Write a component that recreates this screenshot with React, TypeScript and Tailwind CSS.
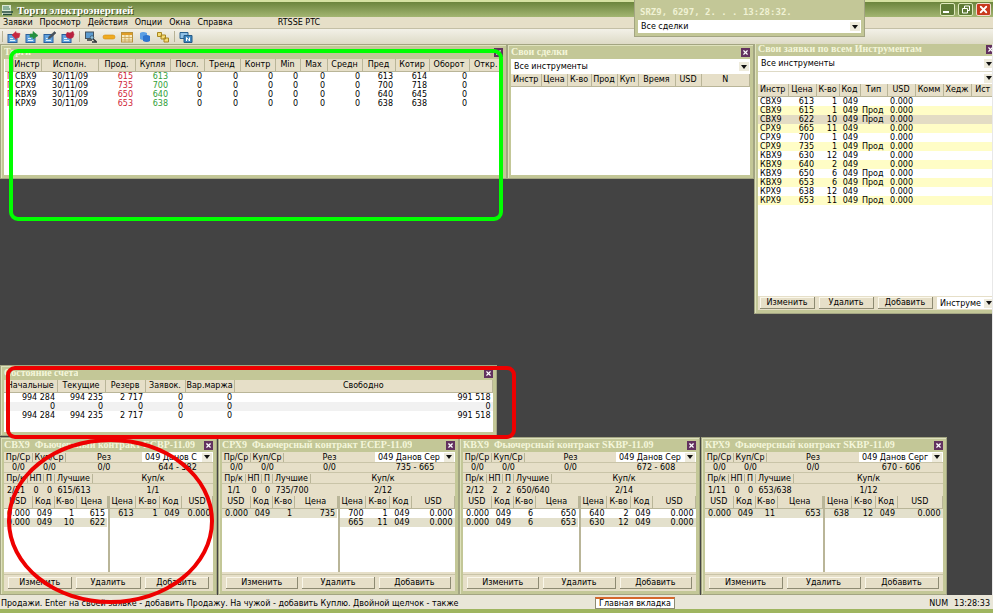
import React from 'react';
import { X } from 'lucide-react';

type Cell = string | number;

interface Contract {
  code: string;
  title: string;
  position: string;
  account: string;
  accountWidth: string;
  range: string;
  sellTotal: string;
  np: number;
  p: number;
  best: string;
  buyTotal: string;
  sells: Cell[][];
  buys: Cell[][];
}

const quotes: Cell[][] = [
  ['П', 'СВХ9', '30/11/09', 615, 613, 0, 0, 0, 0, 0, 0, 613, 614, 0, ''],
  ['П', 'СРХ9', '30/11/09', 735, 700, 0, 0, 0, 0, 0, 0, 700, 718, 0, ''],
  ['П', 'КВХ9', '30/11/09', 650, 640, 0, 0, 0, 0, 0, 0, 640, 645, 0, ''],
  ['П', 'КРХ9', '30/11/09', 653, 638, 0, 0, 0, 0, 0, 0, 638, 638, 0, ''],
];

const quoteColumns = [
  { label: '', col: 'w-[8px]' },
  { label: 'Инстр', col: 'w-[28px]' },
  { label: 'Исполн.', col: 'w-[57px]' },
  { label: 'Прод.', col: 'w-[37px]' },
  { label: 'Купля', col: 'w-[35px]' },
  { label: 'Посл.', col: 'w-[34px]' },
  { label: 'Тренд', col: 'w-[36px]' },
  { label: 'Контр', col: 'w-[35px]' },
  { label: 'Min', col: 'w-[25px]' },
  { label: 'Max', col: 'w-[27px]' },
  { label: 'Средн', col: 'w-[35px]' },
  { label: 'Пред', col: 'w-[33px]' },
  { label: 'Котир', col: 'w-[34px]' },
  { label: 'Оборот', col: 'w-[40px]' },
  { label: 'Откр.', col: '' },
];

// Ask prices are red, bid prices are green
const quoteCell = (_: number, c: number) => {
  if (c === 0) return 'px-[2px] text-left text-[#cf2438]';
  if (c === 1) return 'px-[2px] text-left';
  if (c === 2) return 'pr-[10px] text-right';
  if (c === 3) return 'px-[2px] text-right text-[#cf2438]';
  if (c === 4) return 'px-[2px] text-right text-[#2f9e37]';
  return 'px-[2px] text-right';
};

const orders: Cell[][] = [
  ['СВХ9', 613, 1, '049', '', '0.000'],
  ['СВХ9', 615, 1, '049', 'Прод', '0.000'],
  ['СВХ9', 622, 10, '049', 'Прод', '0.000'],
  ['СРХ9', 665, 11, '049', '', '0.000'],
  ['СРХ9', 700, 1, '049', '', '0.000'],
  ['СРХ9', 735, 1, '049', 'Прод', '0.000'],
  ['КВХ9', 630, 12, '049', '', '0.000'],
  ['КВХ9', 640, 2, '049', '', '0.000'],
  ['КВХ9', 650, 6, '049', 'Прод', '0.000'],
  ['КВХ9', 653, 6, '049', 'Прод', '0.000'],
  ['КРХ9', 638, 12, '049', '', '0.000'],
  ['КРХ9', 653, 11, '049', 'Прод', '0.000'],
];

const orderColumns = [
  { label: 'Инстр', col: 'w-[30px]' },
  { label: 'Цена', col: 'w-[28px]' },
  { label: 'К-во', col: 'w-[23px]' },
  { label: 'Код', col: 'w-[21px]' },
  { label: 'Тип', col: 'w-[27px]' },
  { label: 'USD', col: 'w-[28px]' },
  { label: 'Комм', col: 'w-[28px]' },
  { label: 'Хедж', col: 'w-[28px]' },
  { label: 'Ист', col: '' },
];

const dealColumns = [
  { label: 'Инстр', col: 'w-[30px]' },
  { label: 'Цена', col: 'w-[26px]' },
  { label: 'К-во', col: 'w-[24px]' },
  { label: 'Прод', col: 'w-[26px]' },
  { label: 'Куп', col: 'w-[21px]' },
  { label: 'Время', col: 'w-[37px]' },
  { label: 'USD', col: 'w-[26px]' },
  { label: 'N', col: '' },
];

const accountColumns = [
  { label: 'Начальные', col: 'w-[53px]' },
  { label: 'Текущие', col: 'w-[48px]' },
  { label: 'Резерв', col: 'w-[40px]' },
  { label: 'Заявок.', col: 'w-[40px]' },
  { label: 'Вар.маржа', col: 'w-[49px]' },
  { label: 'Свободно', col: '' },
];

const accountRows: Cell[][] = [
  ['994 284', '994 235', '2 717', 0, 0, '991 518'],
  [0, 0, 0, 0, 0, 0],
  ['994 284', '994 235', '2 717', 0, 0, '991 518'],
];

const sellColumns = [
  { label: 'USD', col: 'w-[28px]' },
  { label: 'Код', col: 'w-[22px]' },
  { label: 'К-во', col: 'w-[22px]' },
  { label: 'Цена', col: '' },
];

const buyColumns = [
  { label: 'Цена', col: 'w-[26px]' },
  { label: 'К-во', col: 'w-[24px]' },
  { label: 'Код', col: 'w-[22px]' },
  { label: 'USD', col: '' },
];

const contracts: Contract[] = [
  {
    code: 'СВХ9',
    title: 'СВХ9  Фьючерсный контракт ECBP-11.09',
    position: 'left-0 w-[217px]',
    account: '049 Данов С',
    accountWidth: 'w-[71px]',
    range: '644 - 582',
    sellTotal: '2/11',
    np: 0,
    p: 0,
    best: '615/613',
    buyTotal: '1/1',
    sells: [['0.000', '049', 1, 615], ['0.000', '049', 10, 622]],
    buys: [[613, 1, '049', '0.000']],
  },
  {
    code: 'СРХ9',
    title: 'СРХ9  Фьючерсный контракт ECEP-11.09',
    position: 'left-[218px] w-[241px]',
    account: '049 Данов Сер',
    accountWidth: 'w-[80px]',
    range: '735 - 665',
    sellTotal: '1/1',
    np: 0,
    p: 0,
    best: '735/700',
    buyTotal: '2/12',
    sells: [['0.000', '049', 1, 735]],
    buys: [[700, 1, '049', '0.000'], [665, 11, '049', '0.000']],
  },
  {
    code: 'КВХ9',
    title: 'КВХ9  Фьючерсный контракт SKBP-11.09',
    position: 'left-[459px] w-[241px]',
    account: '049 Данов Сер',
    accountWidth: 'w-[80px]',
    range: '672 - 608',
    sellTotal: '2/12',
    np: 2,
    p: 2,
    best: '650/640',
    buyTotal: '2/14',
    sells: [['0.000', '049', 6, 650], ['0.000', '049', 6, 653]],
    buys: [[640, 2, '049', '0.000'], [630, 12, '049', '0.000']],
  },
  {
    code: 'КРХ9',
    title: 'КРХ9  Фьючерсный контракт SKBP-11.09',
    position: 'left-[701px] w-[246px]',
    account: '049 Данов Серг',
    accountWidth: 'w-[84px]',
    range: '670 - 606',
    sellTotal: '1/11',
    np: 0,
    p: 0,
    best: '653/638',
    buyTotal: '1/12',
    sells: [['0.000', '049', 11, 653]],
    buys: [[638, 12, '049', '0.000']],
  },
];

interface PanelProps {
  title: string;
  className: string;
  children: React.ReactNode;
}

const Panel: React.FC<PanelProps> = ({ title, className, children }) => (
  <section className={`absolute flex flex-col border border-[#a3a582] bg-[#c3c797] p-[3px] pt-0 shadow-[inset_1px_1px_0_#dfe2bd] ${className}`}>
    <header className="flex h-[14px] shrink-0 items-center justify-between">
      <h2 className="overflow-hidden font-['Liberation_Serif',serif] text-[10px] leading-[12px] font-bold whitespace-pre text-[#f4f6da]">{title}</h2>
      <button aria-label="Закрыть" className="flex h-[9px] w-[9px] shrink-0 items-center justify-center border border-[#62315f] bg-[#62315f] text-white">
        <X size={7} strokeWidth={4} />
      </button>
    </header>
    {children}
  </section>
);

interface DropDownProps {
  label: string;
  value: string;
  className?: string;
}

const DropDown: React.FC<DropDownProps> = ({ label, value, className = '' }) => (
  <div className={`relative flex shrink-0 items-center bg-white ${className}`}>
    <select aria-label={label} className="h-full w-full appearance-none bg-transparent pl-[3px] text-black outline-none">
      <option>{value}</option>
    </select>
    <span className="pointer-events-none absolute right-px flex h-[9px] w-[10px] items-center justify-center bg-[#eeebdc]">
      <svg viewBox="0 0 6 4" className="h-[4px] w-[6px]">
        <path d="M0 0h6L3 4z" fill="#111" />
      </svg>
    </span>
  </div>
);

interface Column {
  label: string;
  col: string;
}

interface GridProps {
  columns: Column[];
  rows: Cell[][];
  cellClass?: (row: number, col: number) => string;
  rowClass?: (row: number) => string;
}

const Grid: React.FC<GridProps> = ({ columns, rows, cellClass = () => 'px-[2px] text-right', rowClass = () => '' }) => (
  <table className="w-full table-fixed border-collapse">
    <colgroup>
      {columns.map(c => <col key={c.label} className={c.col} />)}
    </colgroup>
    <thead>
      <tr className="h-[12px] bg-[#e6dfc8]">
        {columns.map(c => (
          <th key={c.label} className="overflow-hidden border-r border-b border-[#b9b598] p-0 text-center font-normal whitespace-nowrap">{c.label}</th>
        ))}
      </tr>
    </thead>
    <tbody>
      {rows.map((row, r) => (
        <tr key={r} className={`h-[9px] ${rowClass(r)}`}>
          {columns.map((c, i) => (
            <td key={c.label} className={`py-0 whitespace-nowrap ${cellClass(r, i)}`}>{row[i]}</td>
          ))}
        </tr>
      ))}
    </tbody>
  </table>
);

const ActionButtons = () => (
  <>
    {['Изменить', 'Удалить', 'Добавить'].map(label => (
      <button key={label} className="h-[12px] flex-1 border-r border-b border-[#8d8a72] bg-[#e6dfc8] shadow-[inset_1px_1px_0_#faf7ea]">{label}</button>
    ))}
  </>
);

const ContractPanel: React.FC<{ contract: Contract }> = ({ contract: c }) => (
  <Panel title={c.title} className={`top-[393px] h-[158px] ${c.position}`}>
    <div className="flex flex-1 flex-col bg-[#e6dfc8]">
      <div className="flex h-[11px] items-center border-b border-[#c9c4a8]">
        <span className="w-[29px] border-r border-[#b9b598] text-center">Пр/Ср</span>
        <span className="w-[33px] border-r border-[#b9b598] text-center">Куп/Ср</span>
        <span className="flex-1 text-center">Рез</span>
        <DropDown label="Счет" value={c.account} className={`h-[10px] ${c.accountWidth}`} />
      </div>
      <div className="flex h-[9px] items-center">
        <span className="w-[29px] text-center">0/0</span>
        <span className="w-[33px] text-center">0/0</span>
        <span className="flex-1 text-center">0/0</span>
        <span className={`text-center ${c.accountWidth}`}>{c.range}</span>
      </div>
      <div className="flex h-[12px] items-center border-y border-[#c9c4a8]">
        <span className="w-[24px] border-r border-[#b9b598] text-center">Пр/к</span>
        <span className="w-[16px] border-r border-[#b9b598] text-center">НП</span>
        <span className="w-[11px] border-r border-[#b9b598] text-center">П</span>
        <span className="w-[38px] border-r border-[#b9b598] text-center">Лучшие</span>
        <span className="flex-1 text-center">Куп/к</span>
      </div>
      <div className="flex h-[12px] items-center">
        <span className="w-[24px] text-center">{c.sellTotal}</span>
        <span className="w-[16px] text-center">{c.np}</span>
        <span className="w-[11px] text-center">{c.p}</span>
        <span className="w-[38px] text-center">{c.best}</span>
        <span className="flex-1 text-center">{c.buyTotal}</span>
      </div>
      <div className="flex h-[76px] bg-white">
        <div className="flex-1 border-r-2 border-[#b9b598]">
          <Grid columns={sellColumns} rows={c.sells} rowClass={r => (r === c.sells.length - 1 ? 'bg-[#e3e0cc]' : '')} />
        </div>
        <div className="flex-1">
          <Grid columns={buyColumns} rows={c.buys} rowClass={r => (r === c.buys.length - 1 ? 'bg-[#e3e0cc]' : '')} />
        </div>
      </div>
      <div className="mt-auto flex gap-[4px] border-t border-[#c9c4a8] px-[4px] pt-[2px] pb-[2px]">
        <ActionButtons />
      </div>
    </div>
  </Panel>
);

// Small document with a coloured mark in the corner
const OrderIcon: React.FC<{ mark: string; path: string }> = ({ mark, path }) => (
  <svg viewBox="0 0 14 12" className="h-[12px] w-[14px]">
    <rect x="1" y="3.500" width="9" height="8" fill="#62a4e0" stroke="#2b5f9c" />
    <path d="M3 9.500h5M3 7.500h3" stroke="#e2f1fc" />
    <path d={path} fill={mark} stroke={mark} strokeWidth=".6" />
  </svg>
);

const toolbar = [
  { label: 'Продажа', icon: <OrderIcon mark="#c8283f" path="M5 4l4-3.500V2l4 .5-1 4-3 .5v1.500z" /> },
  { label: 'Купля', icon: <OrderIcon mark="#25903f" path="M5 3h3V.5L13 4.500 8 8V6H5z" /> },
  { label: 'Правка', icon: <OrderIcon mark="#46505a" path="M5 8l1-2.500 5.500-5L13 2 7.500 7z" /> },
  { label: 'Снять', icon: <OrderIcon mark="#b8213f" path="M6 1.500l3 .5 3-1.500 1 3-1 3-3 1-3-1-1-2z" /> },
];

const tools = [
  {
    label: 'Монитор',
    icon: (
      <svg viewBox="0 0 14 12" className="h-[12px] w-[14px]">
        <rect x="1.500" y="1" width="8" height="6.500" fill="#5b9bd0" stroke="#44525e" />
        <path d="M3 9h5M8 7l4 3.500M8 11h5" stroke="#30363b" strokeWidth="1.600" />
        <circle cx="8" cy="6.500" r="1.800" fill="#8bc0dc" stroke="#2e4050" strokeWidth=".6" />
      </svg>
    ),
  },
  {
    label: 'Строка',
    icon: (
      <svg viewBox="0 0 14 12" className="h-[12px] w-[14px]">
        <rect x="1" y="4" width="12" height="4" rx="2" fill="#f0ab20" stroke="#d28b12" strokeWidth=".6" />
      </svg>
    ),
  },
  {
    label: 'Таблица',
    icon: (
      <svg viewBox="0 0 14 12" className="h-[12px] w-[14px]">
        <rect x="1.500" y="1.500" width="11" height="9.500" fill="#f7ecc2" stroke="#b8923c" />
        <path d="M2 3h10" stroke="#e09d28" strokeWidth="2" />
        <path d="M5 4v7M9 4v7M2 6.500h10M2 9h10" stroke="#c9a253" strokeWidth=".8" />
      </svg>
    ),
  },
  {
    label: 'Документы',
    icon: (
      <svg viewBox="0 0 14 12" className="h-[12px] w-[14px]">
        <path d="M2 2q3-2 7 0v6q-4 2-7 0z" fill="#5c9fe4" />
        <path d="M5 5q4-2 7 0v5q-3 2-7 0z" fill="#2f75cf" />
      </svg>
    ),
  },
  {
    label: 'Окна каскадом',
    icon: (
      <svg viewBox="0 0 14 12" className="h-[12px] w-[14px]">
        <path d="M1.500 1.500h4v4h-4zM5 4h4.500v4H5zM8 7h4.500v4H8z" fill="#f6dc72" stroke="#a88620" />
      </svg>
    ),
  },
];

export default function App() {
  return (
    <div className="relative flex min-h-screen flex-col overflow-hidden bg-[#e6dfc8] font-['DejaVu_Sans',sans-serif] text-[8px] leading-[9px] text-black">
      {/* Title bar */}
      <header className="flex h-[17px] items-center justify-between border-t-2 border-[#d6e2a2] bg-linear-to-b from-[#6c853d] to-[#a3b571] pr-[2px] pl-[2px]">
        <div className="flex items-center gap-[4px]">
          <svg viewBox="0 0 11 12" className="h-[12px] w-[11px]">
            <path d="M0 1h9v10H0z" fill="#dce9d6" />
            <path d="M1 3h6M1 5h7" stroke="#3c7d60" />
            <path d="M0 8h11M1 10.500h9" stroke="#234a3c" strokeWidth="1.400" />
          </svg>
          <h1 className="font-['Liberation_Serif',serif] text-[11px] leading-[14px] font-bold text-white [text-shadow:1px_1px_0_#45572a]">Торги электроэнергией</h1>
        </div>
        <div className="flex gap-[3px]">
          <button aria-label="Свернуть" className="flex h-[13px] w-[15px] items-end rounded-[2px] border border-[#dfe8bd] bg-[#5f7b36] p-[2px]">
            <span className="h-[2px] w-[6px] bg-white" />
          </button>
          <button aria-label="Развернуть" className="flex h-[13px] w-[15px] items-center justify-center rounded-[2px] border border-[#dfe8bd] bg-[#5f7b36]">
            <svg viewBox="0 0 10 9" className="h-[9px] w-[10px]">
              <path d="M3.500 3V1h5v4.500H7M1.500 3.500h5v4.500h-5z" fill="none" stroke="#fff" />
            </svg>
          </button>
          <button aria-label="Закрыть" className="flex h-[13px] w-[15px] items-center justify-center rounded-[2px] border border-[#f0dcd0] bg-[#c8391d] text-white">
            <X size={11} strokeWidth={4} />
          </button>
        </div>
      </header>

      {/* Menu */}
      <nav className="flex h-[12px] items-center gap-[7px] border-b border-[#c4bfa6] pl-[3px]">
        {['Заявки', 'Просмотр', 'Действия', 'Опции', 'Окна', 'Справка'].map(item => (
          <button key={item}>{item}</button>
        ))}
        <span className="ml-[38px]">RTSSE PTC</span>
      </nav>

      {/* Toolbar */}
      <div className="flex h-[15px] items-center gap-[4px] bg-linear-to-b from-[#f3f1e8] to-[#dddac6] pl-[2px]">
        <span className="h-[11px] w-px bg-[#b7b296]" />
        {toolbar.map(t => <button key={t.label} aria-label={t.label}>{t.icon}</button>)}
        <span className="h-[11px] w-px bg-[#b7b296]" />
        {tools.map(t => <button key={t.label} aria-label={t.label}>{t.icon}</button>)}
        <span className="h-[11px] w-px bg-[#b7b296]" />
        <button aria-label="Раскладка">
          <svg viewBox="0 0 14 12" className="h-[12px] w-[14px]">
            <path d="M1 1.500h8v6H1z" fill="#8fc0e6" stroke="#2a618f" />
            <path d="M5 4.500h8v7H5z" fill="#3f87c0" stroke="#255a86" />
            <path d="M7.500 10V6.500l3 3.500V6.500" fill="none" stroke="#fff" />
          </svg>
        </button>
      </div>

      {/* Desktop with the child windows */}
      <main className="relative min-h-[551px] flex-1 overflow-hidden border-r border-[#e8e8e8] bg-[#434343]">
        <Panel title="Торги" className="top-0 left-0 h-[135px] w-[507px]">
          <div className="flex-1 bg-white pl-[1px]">
            <Grid columns={quoteColumns} rows={quotes} cellClass={quoteCell} />
          </div>
        </Panel>

        <Panel title="Свои сделки" className="top-0 left-[507px] h-[135px] w-[247px]">
          <DropDown label="Инструменты" value="Все инструменты" className="h-[15px]" />
          <div className="flex-1 bg-white">
            <Grid columns={dealColumns} rows={[]} />
          </div>
        </Panel>

        <Panel title="Свои заявки по всем Инструментам" className="top-[-3px] left-[754px] h-[273px] w-[245px]">
          <DropDown label="Инструменты" value="Все инструменты" className="h-[16px] border-b border-[#dedac6]" />
          <DropDown label="Фильтр" value="" className="h-[12px]" />
          <div className="flex-1 bg-white">
            <Grid
              columns={orderColumns}
              rows={orders}
              rowClass={r => (r === 2 ? 'bg-[#e3dcc4]' : r % 2 ? 'bg-[#fffdc6]' : '')}
              cellClass={(_, c) => (c === 0 || c === 4 ? 'px-[2px] text-left' : 'px-[2px] text-right')}
            />
          </div>
          <div className="flex h-[14px] gap-[4px] bg-[#e6dfc8] pt-[1px] pl-[2px]">
            <ActionButtons />
            <DropDown label="Инструмент" value="Инструме" className="h-[12px] w-[58px]" />
          </div>
        </Panel>

        <Panel title="Состояние счета" className="top-[321px] left-0 h-[71px] w-[497px]">
          <div className="flex-1 bg-white">
            <Grid columns={accountColumns} rows={accountRows} rowClass={r => (r === 1 ? 'bg-[#f1f1f1]' : '')} />
          </div>
        </Panel>

        {contracts.map(c => <ContractPanel key={c.code} contract={c} />)}
      </main>

      {/* Status bar */}
      <footer className="flex h-[18px] items-start justify-between border-b-4 border-[#9fb560] bg-[#e9e6d8] pt-[2px] pr-[3px] pl-[1px]">
        <p className="w-[594px] pt-[2px] whitespace-nowrap">
          Продажи. Enter на своей заявке - добавить Продажу. На чужой - добавить Куплю. Двойной щелчок - также
        </p>
        <button className="h-[12px] w-[80px] border border-t-2 border-[#8d8a72] border-t-[#d5672c] bg-white">Главная вкладка</button>
        <div className="ml-auto flex gap-[6px] pt-[2px]">
          <span>NUM</span>
          <time>13:28:33</time>
        </div>
      </footer>

      {/* Floating trades strip */}
      <section className="absolute top-0 left-[634px] w-[231px] border border-t-0 border-[#a3a582] bg-[#c3c797] px-[3px] pb-[3px]">
        <h2 className="h-[20px] pt-[6px] pl-[2px] font-['DejaVu_Sans_Mono',monospace] text-[9px] leading-[12px] font-bold whitespace-pre text-[#f0f2d4]">SRZ9, 6297, 2. . . 13:28:32.</h2>
        <DropDown label="Сделки" value="Все сделки" className="h-[13px]" />
      </section>

      {/* Marker outlines over the windows */}
      <div className="pointer-events-none absolute top-[49px] left-[9px] h-[172px] w-[494px] rounded-[9px] border-4 border-[#00ff00]" />
      <div className="pointer-events-none absolute top-[366px] left-[6px] h-[73px] w-[510px] rounded-[9px] border-4 border-[#ee0000]" />
      <div className="pointer-events-none absolute top-[438px] left-[7px] h-[166px] w-[207px] rounded-[50%] border-4 border-[#ee0000]" />
    </div>
  );
}
